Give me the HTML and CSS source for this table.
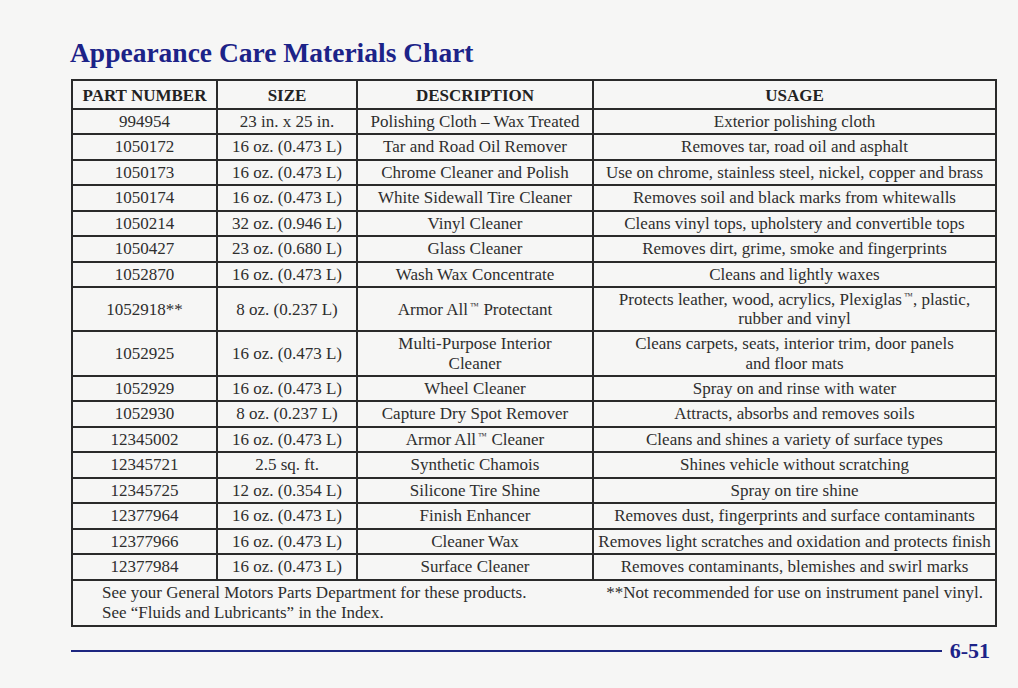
FILE: index.html
```html
<!DOCTYPE html>
<html lang="en">
<head>
<meta charset="utf-8">
<title>Appearance Care Materials Chart</title>
<link rel="stylesheet" href="styles.css">
</head>
<body>
<div class="page">
  <h1 class="title">Appearance Care Materials Chart</h1>
  <table class="chart">
    <colgroup>
      <col class="c-part"><col class="c-size"><col class="c-desc"><col class="c-use">
    </colgroup>
    <thead>
      <tr class="head"><th>PART NUMBER</th><th>SIZE</th><th>DESCRIPTION</th><th>USAGE</th></tr>
    </thead>
    <tbody>
      <tr><td>994954</td><td>23 in. x 25 in.</td><td>Polishing Cloth – Wax Treated</td><td>Exterior polishing cloth</td></tr>
      <tr><td>1050172</td><td>16 oz. (0.473 L)</td><td>Tar and Road Oil Remover</td><td>Removes tar, road oil and asphalt</td></tr>
      <tr><td>1050173</td><td>16 oz. (0.473 L)</td><td>Chrome Cleaner and Polish</td><td>Use on chrome, stainless steel, nickel, copper and brass</td></tr>
      <tr><td>1050174</td><td>16 oz. (0.473 L)</td><td>White Sidewall Tire Cleaner</td><td>Removes soil and black marks from whitewalls</td></tr>
      <tr><td>1050214</td><td>32 oz. (0.946 L)</td><td>Vinyl Cleaner</td><td>Cleans vinyl tops, upholstery and convertible tops</td></tr>
      <tr><td>1050427</td><td>23 oz. (0.680 L)</td><td>Glass Cleaner</td><td>Removes dirt, grime, smoke and fingerprints</td></tr>
      <tr><td>1052870</td><td>16 oz. (0.473 L)</td><td>Wash Wax Concentrate</td><td>Cleans and lightly waxes</td></tr>
      <tr class="double"><td>1052918**</td><td>8 oz. (0.237 L)</td><td>Armor All <span class="tm">™</span> Protectant</td><td>Protects leather, wood, acrylics, Plexiglas <span class="tm">™</span>, plastic,<br>rubber and vinyl</td></tr>
      <tr class="double"><td>1052925</td><td>16 oz. (0.473 L)</td><td>Multi-Purpose Interior<br>Cleaner</td><td>Cleans carpets, seats, interior trim, door panels<br>and floor mats</td></tr>
      <tr><td>1052929</td><td>16 oz. (0.473 L)</td><td>Wheel Cleaner</td><td>Spray on and rinse with water</td></tr>
      <tr><td>1052930</td><td>8 oz. (0.237 L)</td><td>Capture Dry Spot Remover</td><td>Attracts, absorbs and removes soils</td></tr>
      <tr><td>12345002</td><td>16 oz. (0.473 L)</td><td>Armor All <span class="tm">™</span> Cleaner</td><td>Cleans and shines a variety of surface types</td></tr>
      <tr><td>12345721</td><td>2.5 sq. ft.</td><td>Synthetic Chamois</td><td>Shines vehicle without scratching</td></tr>
      <tr><td>12345725</td><td>12 oz. (0.354 L)</td><td>Silicone Tire Shine</td><td>Spray on tire shine</td></tr>
      <tr><td>12377964</td><td>16 oz. (0.473 L)</td><td>Finish Enhancer</td><td>Removes dust, fingerprints and surface contaminants</td></tr>
      <tr><td>12377966</td><td>16 oz. (0.473 L)</td><td>Cleaner Wax</td><td>Removes light scratches and oxidation and protects finish</td></tr>
      <tr><td>12377984</td><td>16 oz. (0.473 L)</td><td>Surface Cleaner</td><td>Removes contaminants, blemishes and swirl marks</td></tr>
      <tr class="note-row">
        <td colspan="4" class="note">
          <div class="note-line"><span>See your General Motors Parts Department for these products.</span><span class="note-right">**Not recommended for use on instrument panel vinyl.</span></div>
          <div class="note-line"><span>See “Fluids and Lubricants” in the Index.</span></div>
        </td>
      </tr>
    </tbody>
  </table>
  <div class="footer">
    <div class="rule"></div>
    <div class="page-no">6-51</div>
  </div>
</div>
</body>
</html>
```
FILE: styles.css
```css
html, body {
  margin: 0;
  padding: 0;
  background: #f6f6f5;
}
body {
  font-family: "Liberation Serif", "Times New Roman", serif;
  color: #2e2e2e;
}
.page {
  width: 924px;
  padding: 37px 0 0 71px;
}
.title {
  margin: 0 0 10px -1px;
  font-size: 27.5px;
  line-height: 32px;
  font-weight: bold;
  color: #1c2388;
}
.chart {
  width: 924px;
  table-layout: fixed;
  border-collapse: collapse;
  border: 2px solid #222;
  font-size: 17px;
}
.c-part { width: 145px; }
.c-size { width: 140px; }
.c-desc { width: 236px; }
.c-use { width: 403px; }
.chart th, .chart td {
  border: 2px solid #2a2a2a;
  text-align: center;
  vertical-align: middle;
  padding: 2px 2px 1.5px;
  line-height: 20px;
  white-space: nowrap;
}
.chart tr.double td {
  line-height: 19.4px;
}
.chart th {
  font-weight: bold;
  padding: 4.5px 2px 2px;
  line-height: 20px;
  color: #222;
}
.tm {
  font-size: 9px;
  vertical-align: 6px;
  line-height: 0;
  margin-left: -2px;
}
.chart td.note {
  text-align: left;
  padding: 2px 12px 2px 29px;
  line-height: 20px;
}
.note-line {
  display: flex;
  justify-content: space-between;
}
.footer {
  display: flex;
  align-items: center;
  margin-top: 12.5px;
  padding-right: 5px;
}
.rule {
  flex: 1;
  height: 2px;
  background: #1d2680;
  margin-right: 8px;
}
.page-no {
  font-size: 22px;
  line-height: 24px;
  font-weight: bold;
  color: #1c2388;
}
```
